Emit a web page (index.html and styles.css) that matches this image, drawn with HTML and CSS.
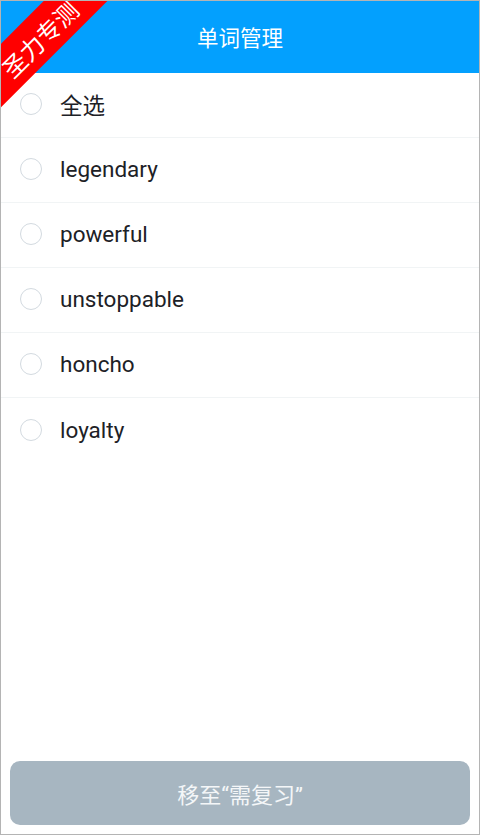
FILE: index.html
```html
<!DOCTYPE html>
<html lang="zh">
<head>
<meta charset="utf-8">
<title>单词管理</title>
<link rel="stylesheet" href="styles.css">
</head>
<body>
<div class="screen">
  <header class="topbar">单词管理</header>
  <ul class="list">
    <li class="row"><span class="radio"></span><span class="label">全选</span></li>
    <li class="row"><span class="radio"></span><span class="label">legendary</span></li>
    <li class="row"><span class="radio"></span><span class="label">powerful</span></li>
    <li class="row"><span class="radio"></span><span class="label">unstoppable</span></li>
    <li class="row"><span class="radio"></span><span class="label">honcho</span></li>
    <li class="row last"><span class="radio"></span><span class="label">loyalty</span></li>
  </ul>
  <div class="footer">
    <button class="move-btn">移至“需复习”</button>
  </div>
  <div class="ribbon"><span class="ribbon-text">圣力专测</span></div>
</div>
</body>
</html>
```
FILE: styles.css
```css
* { box-sizing: border-box; }
html, body { margin: 0; padding: 0; }
body {
  font-family: Roboto, "Noto Sans CJK SC", sans-serif;
  background: #fff;
}
.screen {
  position: relative;
  width: 480px;
  height: 835px;
  border: 1px solid #b4b4b4;
  display: flex;
  flex-direction: column;
  overflow: hidden;
  background: #fff;
}
.topbar {
  height: 72px;
  flex: none;
  background: #03a0fe;
  color: #fff;
  font-size: 21.5px;
  display: flex;
  align-items: center;
  justify-content: center;
  padding-bottom: 1px;
}
.list {
  list-style: none;
  margin: 0;
  padding: 0;
  flex: 1;
}
.row {
  height: 65px;
  display: flex;
  align-items: center;
  border-bottom: 1px solid #f1f4f5;
  padding-left: 19px;
  padding-bottom: 2px;
}
.row.last { border-bottom: none; }
.radio {
  width: 22px;
  height: 22px;
  border: 1.5px solid #d3dae0;
  border-radius: 50%;
  flex: none;
}
.label {
  margin-left: 18px;
  font-size: 22.5px;
  color: #1d2126;
}
.footer {
  flex: none;
  padding: 0 9px 9px 9px;
}
.move-btn {
  display: block;
  width: 100%;
  height: 64px;
  border: none;
  border-radius: 10px;
  background: #a7b6c1;
  color: #f4f6f8;
  font-family: inherit;
  font-size: 22px;
}
.ribbon {
  position: absolute;
  left: -63px;
  top: 15px;
  width: 200px;
  height: 45px;
  background: #ff0000;
  transform: rotate(-45deg);
  display: flex;
  align-items: center;
  justify-content: center;
  color: #fff;
  font-size: 24px;
  line-height: 1;
  padding-top: 6px;
}
.ribbon-text {
  padding-left: 2px;
}
```
